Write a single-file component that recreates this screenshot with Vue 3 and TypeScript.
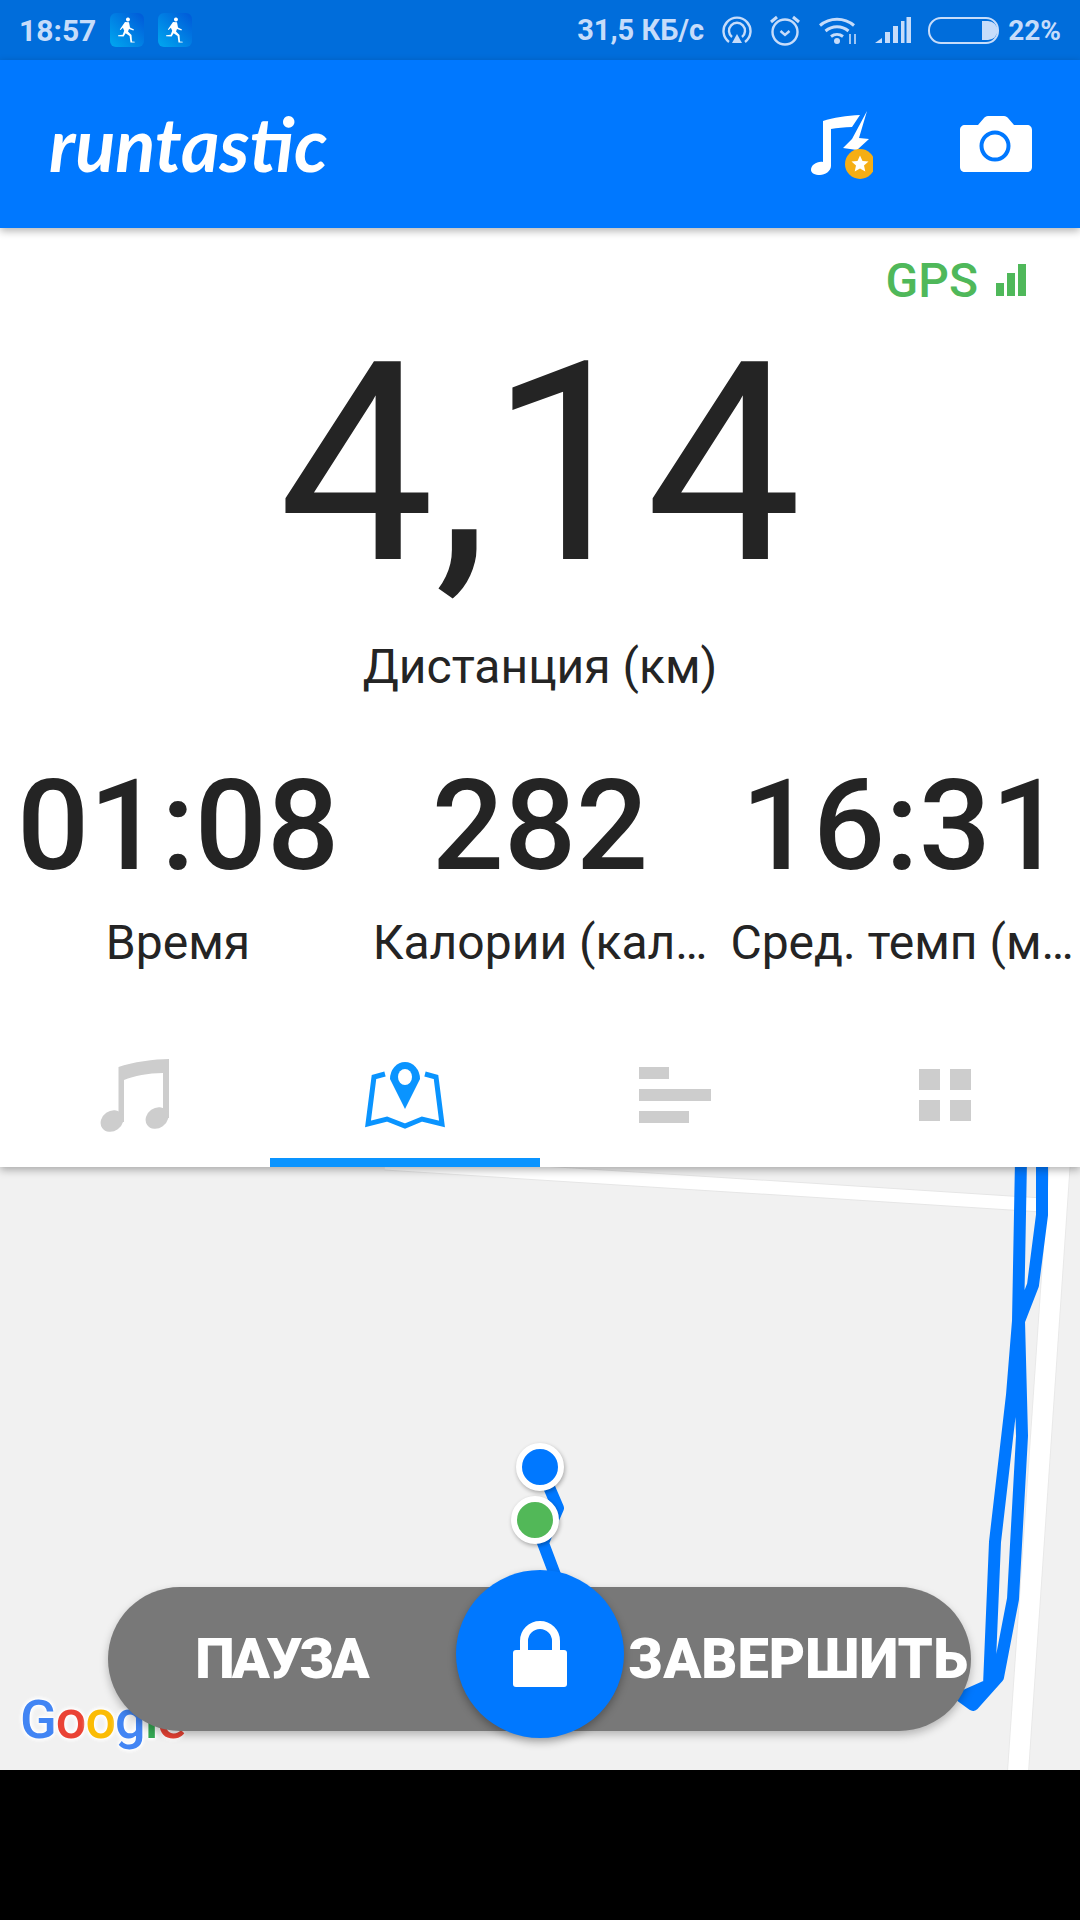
<template>
  <div class="screen">
    <div class="status">
      <span class="clock">18:57</span>
      <span v-for="n in 2" :key="n" class="tile">
        <svg width="34" height="34" viewBox="0 0 34 34">
          <defs>
            <linearGradient :id="`tile${n}`" x1="0" y1="1" x2="1" y2="0">
              <stop offset="0" stop-color="#00a8f0" />
              <stop offset="1" stop-color="#0058d8" />
            </linearGradient>
          </defs>
          <rect width="34" height="34" rx="6" :fill="`url(#tile${n})`" />
          <path d="M18 4.500a2 2 0 1 1-.1 0zM15 9l4 .3 1 5.200 4 2-.6 1-4.400-1.500-1 2.500 3.500 3.500.5 6.500 2.700.3v.8l-4.200-.2-.9-6.500-4-2.700-2 3.300-5.500-.3v-1l4.600-.4 1.500-4-1.300-3-2.300 2.300-.8-.7z" fill="#fff" />
        </svg>
      </span>
      <span class="spacer" />
      <span class="speed">31,5 КБ/с</span>
      <svg class="sicon" width="30" height="30" viewBox="0 0 30 30" fill="none" stroke="#c6dcfa" stroke-width="2.400">
        <path d="M7 27A13.500 13.500 0 1 1 23 27" />
        <path d="M10 22A8 8 0 1 1 20 22" />
        <path d="M15 19l5 9H10z" fill="#c6dcfa" stroke="none" />
      </svg>
      <svg class="sicon" width="32" height="32" viewBox="0 0 32 32" fill="none" stroke="#c6dcfa" stroke-width="2.400">
        <circle cx="16" cy="18" r="12.500" />
        <path d="M11.500 17l4.500 4 4.500-4" />
        <path d="M2 8l6-5M30 8l-6-5" stroke-width="3" />
      </svg>
      <svg class="sicon" width="40" height="28" viewBox="0 0 40 28" fill="none" stroke="#c6dcfa" stroke-width="3">
        <path d="M2 9.500a26 26 0 0 1 34 0" />
        <path d="M7.500 15a18 18 0 0 1 23 0" />
        <path d="M13 20.500a10 10 0 0 1 12 0" />
        <circle cx="19" cy="25" r="3" fill="#c6dcfa" stroke="none" />
        <path d="M32 18v10M37 18v10" stroke-width="1.600" />
      </svg>
      <svg class="sicon" width="36" height="26" viewBox="0 0 36 26" fill="#c6dcfa">
        <path d="M0 26l7-5v5z" />
        <rect x="10" y="15" width="5" height="11" />
        <rect x="18" y="9" width="5" height="17" />
        <rect x="26" y="4" width="3.500" height="22" />
        <rect x="31.500" y="0" width="4.500" height="26" />
      </svg>
      <svg class="sicon" width="72" height="27" viewBox="0 0 72 27" fill="none">
        <rect x="1" y="1" width="69" height="25" rx="12" stroke="#c6dcfa" stroke-width="2" />
        <path d="M54 4h6a9.500 9.500 0 0 1 0 19h-6z" fill="#c6dcfa" />
      </svg>
      <span class="battery">22%</span>
    </div>

    <header class="topbar">
      <span class="logo">runtastic</span>
      <span class="spacer" />
      <svg class="music-power" width="62" height="70" viewBox="0 0 62 70">
        <path d="M12 12C22 8.500 36 6.500 49 6l-8 12c-8 0-15 1-21 2v37c0 5-6 9-11 9-5 0-9-2-9-5 0-5 6-9 12-8z" fill="#fff" />
        <path d="M56 2L41 30l-9 9 14 2 12-11-10-1z" fill="#fff" stroke="#0078ff" stroke-width="1.500" paint-order="stroke" />
        <circle cx="49" cy="55" r="15" fill="#f5ae14" />
        <path d="M49 46.500l2.500 5.500 6 .6-4.500 4 1.300 6-5.300-3.100-5.300 3.100 1.300-6-4.500-4 6-.6z" fill="#fff" />
      </svg>
      <svg class="camera" width="72" height="56" viewBox="0 0 72 56">
        <path d="M5 9h13l6-7c1-1 2-2 4-2h16c2 0 3 1 4 2l6 7h13c3 0 5 2 5 5v37c0 3-2 5-5 5H5c-3 0-5-2-5-5V14c0-3 2-5 5-5z" fill="#fff" />
        <circle cx="35" cy="30" r="13.500" fill="#fff" stroke="#0078ff" stroke-width="4" />
      </svg>
    </header>

    <main class="panel">
      <div class="gps">
        <span>GPS</span>
        <span class="gps-bars"><i /><i /><i /></span>
      </div>
      <div class="distance">4,14</div>
      <div class="distance-label">Дистанция (км)</div>
      <div class="stats">
        <div v-for="stat in stats" :key="stat.label" class="stat">
          <div class="stat-value">{{ stat.value }}</div>
          <div class="stat-label">{{ stat.label }}</div>
        </div>
      </div>
    </main>

    <nav class="tabs">
      <div class="tab">
        <svg width="70" height="74" viewBox="0 0 70 74" fill="#cdcdcd">
          <path d="M18.500 9C32 4 55 1 69 1V60H63V15C48 15 34 18 24 22V64H18.500z" />
          <ellipse cx="12" cy="63" rx="12" ry="10" transform="rotate(-35 12 63)" />
          <ellipse cx="57" cy="60" rx="12" ry="10" transform="rotate(-35 57 60)" />
        </svg>
      </div>
      <div class="tab active">
        <svg width="80" height="68" viewBox="0 0 80 68">
          <path d="M40 0a15 17 0 0 1 15 17L40 47 25 17A15 17 0 0 1 40 0z" fill="#0a94ff" />
          <ellipse cx="40" cy="15" rx="7" ry="8" fill="#fff" />
          <path d="M20 12L9 15 3 62l19-5 18 7 17-7 20 5-6-47-11-3" fill="none" stroke="#0a94ff" stroke-width="5" />
        </svg>
      </div>
      <div class="tab">
        <div class="bars">
          <i style="width: 30px" />
          <i style="width: 72px" />
          <i style="width: 50px" />
        </div>
      </div>
      <div class="tab">
        <div class="squares"><i /><i /><i /><i /></div>
      </div>
    </nav>

    <section class="map">
      <svg class="map-art" width="1080" height="603" viewBox="0 1167 1080 603" fill="none" stroke-linejoin="round">
        <path d="M385 1163L1042 1205" stroke="#e6e6e6" stroke-width="15" />
        <path d="M385 1163L1042 1205" stroke="#fff" stroke-width="13" />
        <path d="M1060 1160L1018 1772" stroke="#e9e9e9" stroke-width="22" />
        <path d="M1060 1160L1018 1772" stroke="#fff" stroke-width="20" />
        <g stroke="#0078ff" stroke-width="12">
          <path d="M1021 1160L1018 1321L1012 1395L995 1542L989 1685L962 1697L973 1705L998 1677L1013 1599L1022 1436L1019 1321L1033 1285L1042 1215V1160" />
          <path d="M549 1487L558 1508L547 1533L543 1543L557 1580" />
        </g>
      </svg>
      <div class="google">
        <span class="g-blue">G</span><span class="g-red">o</span><span class="g-yellow">o</span><span class="g-blue">g</span><span class="g-green">l</span><span class="g-red">e</span>
      </div>
      <span class="pin pin-blue" />
      <span class="pin pin-green" />
      <div class="pill">
        <span class="pause">ПАУЗА</span>
        <span />
        <span>ЗАВЕРШИТЬ</span>
      </div>
      <div class="lock">
        <svg width="54" height="66" viewBox="0 0 54 66">
          <path d="M11 32V20a16 16 0 0 1 32 0v12" fill="none" stroke="#fff" stroke-width="8" />
          <rect y="29" width="54" height="37" rx="3" fill="#fff" />
        </svg>
      </div>
    </section>

    <div class="navbar" />
  </div>
</template>

<script setup lang="ts">
const stats = [
  { value: "01:08", label: "Время" },
  { value: "282", label: "Калории (кал…" },
  { value: "16:31", label: "Сред. темп (м…" },
];
</script>

<style>
html,
body {
  margin: 0;
  background: #000;
}
</style>

<style scoped>
.screen {
  display: flex;
  flex-direction: column;
  width: 1080px;
  height: 1920px;
  overflow: hidden;
  font-family: Roboto, "Noto Sans", sans-serif;
  background: #000;
}

.spacer {
  flex: 1;
}

.status {
  display: flex;
  align-items: center;
  flex: 0 0 60px;
  height: 60px;
  padding: 0 19px 0 19px;
  box-sizing: border-box;
  background: #006ddb;
  color: #c6dcfa;
  font-size: 29px;
  font-weight: 700;
}

.clock {
  font-size: 30px;
  width: 91px;
}

.tile {
  display: flex;
  margin-right: 14px;
}

.speed {
  margin-right: 18px;
}

.sicon {
  flex: none;
  margin-right: 17px;
}

.battery {
  margin-left: -9px;
  font-size: 28px;
}

.topbar {
  position: relative;
  z-index: 4;
  display: flex;
  align-items: center;
  flex: 0 0 168px;
  padding: 0 48px 0 49px;
  box-sizing: border-box;
  background: #0078ff;
  box-shadow: 0 3px 8px rgba(0, 0, 0, 0.3);
}

.logo {
  color: #fff;
  font-family: Lato, sans-serif;
  font-size: 74px;
  font-style: italic;
  font-weight: 700;
  line-height: 1;
}

.music-power {
  margin-right: 87px;
}

.panel {
  position: relative;
  z-index: 3;
  flex: 0 0 802px;
  background: #fff;
  color: #242424;
}

.gps {
  display: flex;
  justify-content: flex-end;
  align-items: center;
  gap: 18px;
  height: 48px;
  margin-top: 28px;
  padding-right: 54px;
  color: #4fb85a;
  font-size: 48px;
  font-weight: 500;
}

.gps-bars {
  display: flex;
  align-items: flex-end;
  gap: 3px;
  height: 32px;
}

.gps-bars i {
  width: 8px;
  background: #4fb85a;
}

.gps-bars i:nth-child(1) {
  height: 13px;
}

.gps-bars i:nth-child(2) {
  height: 23px;
}

.gps-bars i:nth-child(3) {
  height: 32px;
}

.distance {
  height: 300px;
  margin-top: 10px;
  font-size: 278px;
  line-height: 300px;
  text-align: center;
}

.distance-label {
  margin-top: 25px;
  font-size: 48px;
  line-height: 56px;
  text-align: center;
}

.stats {
  display: grid;
  grid-template-columns: repeat(3, 360px);
  margin-top: 61px;
}

.stat {
  min-width: 0;
  padding: 0 4px;
  text-align: center;
}

.stat:first-child {
  padding: 0 8px 0 4px;
}

.stat:last-child {
  padding: 0 0 0 4px;
}

.stat-value {
  font-size: 127px;
  font-weight: 500;
  line-height: 140px;
}

.stat-label {
  margin-top: 19px;
  font-size: 48px;
  line-height: 56px;
  white-space: nowrap;
}

.tabs {
  position: relative;
  z-index: 2;
  display: grid;
  grid-template-columns: repeat(4, 270px);
  flex: 0 0 137px;
  background: #fff;
  box-shadow: 0 3px 8px rgba(0, 0, 0, 0.3);
}

.tab {
  display: flex;
  justify-content: center;
  padding-top: 28px;
  box-sizing: border-box;
}

.tab.active {
  padding-top: 32px;
  border-bottom: 9px solid #0a94ff;
}

.bars {
  display: flex;
  flex-direction: column;
  gap: 10px;
  width: 72px;
  padding-top: 9px;
}

.bars i {
  display: block;
  height: 12px;
  background: #cdcdcd;
}

.squares {
  display: grid;
  grid-template-columns: 21px 21px;
  grid-auto-rows: 21px;
  gap: 10px;
  padding-top: 11px;
}

.squares i {
  background: #cdcdcd;
}

.map {
  position: relative;
  flex: 0 0 603px;
  overflow: hidden;
  background: #f1f1f1;
}

.map-art {
  position: absolute;
  top: 0;
  left: 0;
}

.google {
  position: absolute;
  top: 523px;
  left: 20px;
  font-family: Roboto, sans-serif;
  font-size: 54px;
  font-weight: 500;
  letter-spacing: -1px;
  line-height: 60px;
  text-shadow: 0 0 3px #fff, 0 0 3px #fff, 0 0 5px #fff, 0 0 5px #fff, 0 0 6px #fff;
}

.g-blue {
  color: #4285f4;
}

.g-red {
  color: #ea4335;
}

.g-yellow {
  color: #fbbc05;
}

.g-green {
  color: #34a853;
}

.pin {
  position: absolute;
  width: 36px;
  height: 36px;
  border: 6px solid #fff;
  border-radius: 50%;
  box-shadow: 1px 2px 4px rgba(0, 0, 0, 0.3);
}

.pin-blue {
  top: 276px;
  left: 516px;
  background: #0078ff;
}

.pin-green {
  top: 329px;
  left: 511px;
  background: #52b858;
}

.pill {
  position: absolute;
  top: 420px;
  left: 108px;
  display: grid;
  grid-template-columns: 346px 1fr 346px;
  align-items: center;
  width: 863px;
  height: 144px;
  border-radius: 72px;
  background: #787878;
  box-shadow: 0 4px 8px rgba(0, 0, 0, 0.25);
  color: #fff;
  font-family: Roboto, sans-serif;
  font-size: 56px;
  font-weight: 900;
  text-align: center;
  white-space: nowrap;
}

.pause {
  letter-spacing: -3px;
}

.lock {
  position: absolute;
  top: 403px;
  left: 456px;
  display: flex;
  align-items: center;
  justify-content: center;
  width: 168px;
  height: 168px;
  border-radius: 50%;
  background: #0078ff;
  box-shadow: 0 4px 8px rgba(0, 0, 0, 0.3);
}

.navbar {
  flex: 1;
  background: #000;
}
</style>
